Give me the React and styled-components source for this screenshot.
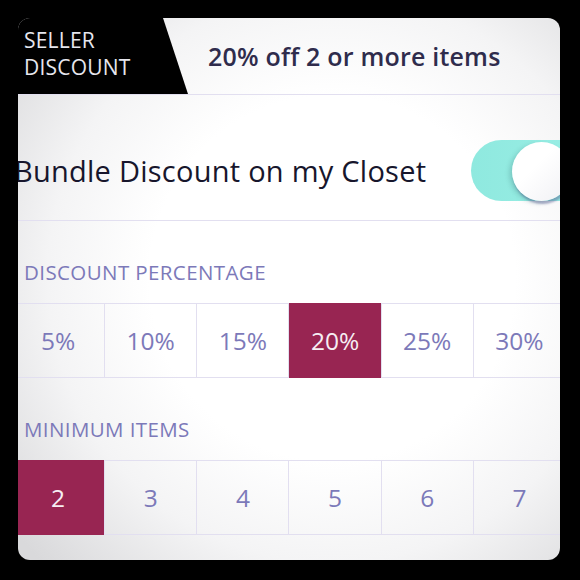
import React, { useState } from "react";
import styled, { createGlobalStyle } from "styled-components";

const Global = createGlobalStyle`
  html, body { margin: 0; padding: 0; background: #000; }
  body { width: 580px; height: 580px; overflow: hidden; font-family: "Open Sans", Lato, sans-serif; }
`;

const Page = styled.div`
  width: 580px;
  height: 580px;
  background: #000;
  padding: 18px;
  box-sizing: border-box;
`;

const Card = styled.div`
  width: 542px;
  height: 542px;
  border-radius: 12px;
  overflow: hidden;
  display: flex;
  flex-direction: column;
  background: radial-gradient(ellipse 75% 75% at 58% 48%, #ffffff 45%, #f4f4f5 70%, #d9d9db 100%);
`;

const Header = styled.div`
  height: 77px;
  flex: none;
  display: flex;
  align-items: center;
  border-bottom: 1px solid #e2dff0;
  box-sizing: border-box;
`;

const Tab = styled.div`
  width: 170px;
  height: 100%;
  background: #000;
  clip-path: polygon(0 0, 145px 0, 170px 100%, 0 100%);
  color: #e6e6ee;
  font-size: 21px;
  line-height: 27px;
  padding: 9px 0 0 6px;
  box-sizing: border-box;
  letter-spacing: 0.2px;
`;

const Title = styled.div`
  margin-left: 20px;
  font-size: 25px;
  font-weight: 600;
  color: #2f2c4c;
  letter-spacing: 0.2px;
  white-space: nowrap;
`;

const ToggleRow = styled.div`
  height: 126px;
  flex: none;
  display: flex;
  align-items: center;
  justify-content: space-between;
  padding-top: 26px;
  box-sizing: border-box;
  border-bottom: 1px solid #e2dff0;
`;

const RowText = styled.div`
  margin-left: -4px;
  font-size: 29px;
  color: #17162c;
  letter-spacing: 0.25px;
  white-space: nowrap;
`;

const Switch = styled.div`
  width: 120px;
  height: 61px;
  border-radius: 31px;
  background: linear-gradient(90deg, #8fe9df, #9aeee5);
  margin-right: -31px;
  position: relative;
  flex: none;
`;

const Knob = styled.div`
  position: absolute;
  top: 2px;
  left: 41px;
  width: 59px;
  height: 59px;
  border-radius: 50%;
  background: linear-gradient(135deg, #ffffff 40%, #f0f0f4);
  box-shadow: -3px 2px 4px rgba(60, 120, 120, 0.25), 1px 3px 2px rgba(90, 90, 150, 0.45);
`;

const Label = styled.div`
  height: 82px;
  flex: none;
  display: flex;
  align-items: center;
  padding: 20px 0 0 6px;
  box-sizing: border-box;
  font-size: 20.5px;
  color: #7c79b9;
  letter-spacing: 0.4px;
  white-space: nowrap;
`;

const Grid = styled.div`
  height: 75px;
  flex: none;
  margin-left: -6px;
  width: 553px;
  display: grid;
  grid-template-columns: repeat(6, 1fr);
  border-top: 1px solid #e2dff0;
  border-bottom: 1px solid #e2dff0;
  box-sizing: border-box;
`;

const Cell = styled.div`
  display: flex;
  align-items: center;
  justify-content: center;
  font-size: 24.5px;
  color: ${(p) => (p.$active ? "#f6eef3" : "#7c79b9")};
  background: ${(p) => (p.$active ? "#982552" : "transparent")};
  border-left: ${(p) => (p.$first ? "none" : "1px solid #e2dff0")};
  margin: ${(p) => (p.$active ? "-1px 0" : "0")};
`;

export default function App() {
  const [pct, setPct] = useState("20%");
  const [min, setMin] = useState("2");
  const pcts = ["5%", "10%", "15%", "20%", "25%", "30%"];
  const mins = ["2", "3", "4", "5", "6", "7"];
  return (
    <Page>
      <Global />
      <Card>
        <Header>
          <Tab>
            SELLER
            <br />
            DISCOUNT
          </Tab>
          <Title>20% off 2 or more items</Title>
        </Header>
        <ToggleRow>
          <RowText>Bundle Discount on my Closet</RowText>
          <Switch>
            <Knob />
          </Switch>
        </ToggleRow>
        <Label>DISCOUNT PERCENTAGE</Label>
        <Grid>
          {pcts.map((v, i) => (
            <Cell key={v} $first={i === 0} $active={v === pct} onClick={() => setPct(v)}>
              {v}
            </Cell>
          ))}
        </Grid>
        <Label>MINIMUM ITEMS</Label>
        <Grid>
          {mins.map((v, i) => (
            <Cell key={v} $first={i === 0} $active={v === min} onClick={() => setMin(v)}>
              {v}
            </Cell>
          ))}
        </Grid>
      </Card>
    </Page>
  );
}
